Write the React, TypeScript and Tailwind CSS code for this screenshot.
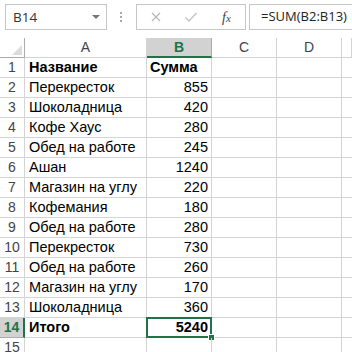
import { Fragment } from "react";

const rows: [string, string][] = [
	["Название", "Сумма"],
	["Перекресток", "855"],
	["Шоколадница", "420"],
	["Кофе Хаус", "280"],
	["Обед на работе", "245"],
	["Ашан", "1240"],
	["Магазин на углу", "220"],
	["Кофемания", "180"],
	["Обед на работе", "280"],
	["Перекресток", "730"],
	["Обед на работе", "260"],
	["Магазин на углу", "170"],
	["Шоколадница", "360"],
	["Итого", "5240"],
	["", ""],
];

const cols = ["A", "B", "C", "D", ""];

export default function App() {
	return (
		<div className="w-[352px] h-[352px] overflow-hidden bg-white text-[#222]">
			{/* formula bar */}
			<div className="flex items-center h-[38px] pt-[4px] pb-[8px] pl-[5px] font-['Open_Sans',sans-serif]">
				<div className="flex items-center justify-between w-[102px] h-[26px] border border-[#c6c6c6] pl-[7px] pr-[6px] text-[13.5px] text-[#333]">
					<span>B14</span>
					<span className="w-0 h-0 border-x-[4px] border-x-transparent border-t-[4px] border-t-[#777]" />
				</div>
				<div className="flex flex-col gap-[2px] ml-[13px] mr-[14px]">
					<span className="w-[2px] h-[2px] bg-[#aaa]" />
					<span className="w-[2px] h-[2px] bg-[#aaa]" />
					<span className="w-[2px] h-[2px] bg-[#aaa]" />
				</div>
				<div className="flex items-center w-[110px] h-[26px] border border-[#c6c6c6]">
					<svg width="12" height="12" viewBox="0 0 12 12" className="ml-[13px]">
						<path d="M2 2l8 8M10 2l-8 8" stroke="#b8b8b8" strokeWidth="1.2" />
					</svg>
					<svg width="14" height="12" viewBox="0 0 14 12" className="ml-[22px]">
						<path d="M1.5 6.5l3.5 3.5 7.5-8" stroke="#c4c4c4" strokeWidth="1.4" fill="none" />
					</svg>
					<span className="ml-[24px] font-['Liberation_Serif',serif] italic text-[14px] text-[#444]">
						f<span className="text-[11px]">x</span>
					</span>
				</div>
				<div className="flex items-center ml-[3px] h-[26px] flex-1 border border-r-0 border-[#c6c6c6] pl-[11px] text-[13px] text-[#222] whitespace-nowrap">
					=SUM(B2:B13)
				</div>
			</div>

			{/* sheet */}
			<div className="grid grid-cols-[25px_122px_65px_65px_65px_1fr] font-['Liberation_Sans',sans-serif]">
				<div className="h-[20px] border-r border-b border-[#ababab] flex items-end justify-end pr-[2px] pb-[2px]">
					<span className="w-0 h-0 border-l-[10px] border-l-transparent border-b-[10px] border-b-[#dcdcdc]" />
				</div>
				{cols.map((c, i) => (
					<div
						key={i}
						className={
							c === "B"
								? "h-[20px] flex items-center justify-center bg-[#d2d2d2] border-r border-[#ababab] border-b-2 border-b-[#217346] text-[14px] font-bold text-[#217346]"
								: "h-[20px] flex items-center justify-center border-r border-b border-[#d4d4d4] text-[14px] text-[#444]"
						}
					>
						{c}
					</div>
				))}
				{rows.map(([a, b], i) => {
					const n = i + 1;
					const bold = n === 1 || n === 14;
					const sel = n === 14;
					return (
						<Fragment key={n}>
							<div
								className={
									sel
										? "h-[20px] flex items-center justify-center bg-[#d2d2d2] border-r-2 border-r-[#217346] border-b border-[#ababab] text-[14px] font-bold text-[#217346]"
										: "h-[20px] flex items-center justify-center border-r border-b border-[#d4d4d4] text-[14px] text-[#444]"
								}
							>
								{n}
							</div>
							<div
								className={`h-[20px] flex items-center pl-[4px] border-r border-b border-[#d4d4d4] text-[14.5px] text-black ${bold ? "font-bold" : ""}`}
							>
								{a}
							</div>
							<div
								className={`relative h-[20px] flex items-center ${n === 1 ? "justify-start pl-[3px]" : "justify-end pr-[3px]"} border-r border-b border-[#d4d4d4] text-[14.5px] text-black ${bold ? "font-bold" : ""}`}
							>
								{b}
								{sel && (
									<>
										<span className="absolute -left-px -top-px -right-px -bottom-px border-2 border-[#217346]" />
										<span className="absolute -right-[4px] -bottom-[4px] w-[7px] h-[7px] bg-[#217346] border border-white" />
									</>
								)}
							</div>
							<div className="h-[20px] border-r border-b border-[#d4d4d4]" />
							<div className="h-[20px] border-r border-b border-[#d4d4d4]" />
							<div className="h-[20px] border-b border-[#d4d4d4]" />
						</Fragment>
					);
				})}
			</div>
		</div>
	);
}
